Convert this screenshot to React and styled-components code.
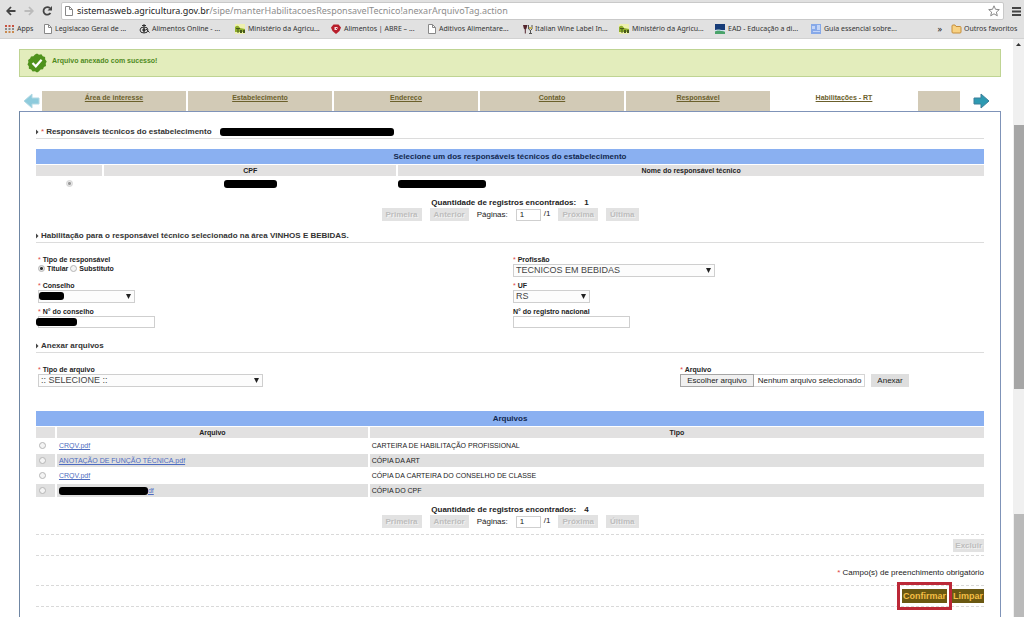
import React from 'react';
import styled, { createGlobalStyle, css } from 'styled-components';

const Global = createGlobalStyle`
  * { box-sizing: border-box; }
  body {
    margin: 0;
    background: #fff;
    color: #222;
    font: 8px/10px "Liberation Sans", Arial, sans-serif;
  }
  button, input, select { font: inherit; color: inherit; margin: 0; }
`;

const Window = styled.div`
  display: flex;
  flex-direction: column;
  min-height: 100vh;
  overflow: hidden;
`;

/* Browser bars */
const Chrome = styled.header`
  background: #e1e1e1;
  border-bottom: 1px solid #d2d2d2;
  font-family: "Noto Sans", "Open Sans", sans-serif;
`;
const Toolbar = styled.div`
  display: flex;
  align-items: center;
  gap: 8px;
  height: 20px;
  padding: 2px 3px 0 6px;
`;
const IconButton = styled.button`
  display: flex;
  padding: 0;
  border: 0;
  background: none;
  svg { display: block; }
`;
const AddressBar = styled.div`
  flex: 1;
  display: flex;
  align-items: center;
  gap: 3px;
  height: 18px;
  padding: 0 3px 0 2px;
  background: #fff;
  border: 1px solid #c9c9c9;
  border-radius: 2px;
  svg { display: block; }
`;
const Url = styled.div`
  flex: 1;
  font-size: 9px;
  line-height: 14px;
  color: #8d8d8d;
  b { font-weight: 400; color: #222; }
`;
const Bookmarks = styled.nav`
  display: flex;
  align-items: center;
  height: 18px;
  padding: 0 5px 0 4px;
`;
const Bookmark = styled.a`
  display: flex;
  align-items: center;
  gap: 2px;
  flex: 0 1 ${p => p.$width || 96}px;
  min-width: 0;
  font-size: 7px;
  color: #333;
  white-space: nowrap;
  text-decoration: none;
  svg { flex: none; display: block; }
`;
const More = styled.span`
  margin: 0 9px 0 auto;
  font-size: 9px;
`;

/* Page frame */
const Page = styled.div`
  flex: 1;
  display: flex;
`;
const Content = styled.main`
  flex: 1;
  display: flex;
  flex-direction: column;
  padding: 10px 12px 0 19px;
`;
const Scrollbar = styled.div`
  display: flex;
  flex-direction: column;
  flex: 0 0 10px;
  background: #f0f0f0;
`;
const Track = styled.div`
  flex: ${p => p.$part};
  svg { display: block; margin: 4px 3px; }
`;
const Thumb = styled.div`
  flex: ${p => p.$part};
  margin-left: 1px;
  background: ${p => (p.$light ? '#bababa' : '#a6a6a6')};
`;

const Alert = styled.div`
  display: flex;
  gap: 5px;
  height: 28px;
  padding: 3px 7px;
  background: #e3edbc;
  border: 1px solid #bfd493;
  font-size: 7px;
  line-height: 15px;
  font-weight: 700;
  color: #4f8a1c;
  svg { display: block; }
`;

/* Tabs */
const Tabs = styled.nav`
  display: flex;
  gap: 2px;
  margin-top: 14px;
  height: 20px;
`;
const TabArrow = styled.button`
  display: flex;
  align-items: center;
  justify-content: ${p => p.$align};
  flex: 0 0 ${p => p.$width}px;
  padding: 0;
  border: 0;
  background: none;
`;
const Tab = styled.a`
  flex: ${p => (p.$stub ? '0 0 42px' : '1')};
  background: ${p => (p.$active ? '#fff' : '#d2cab6')};
  color: #6b602c;
  font-size: 7px;
  line-height: 13px;
  font-weight: 700;
  text-align: center;
`;

const Panel = styled.section`
  flex: 1;
  padding: 0 16px;
  border: 1px solid #7f93b8;
  border-left-color: #6f86a3;
  border-bottom: 0;
`;

const Redacted = styled.span`
  display: inline-block;
  vertical-align: middle;
  width: ${p => p.$width}px;
  height: 8px;
  border-radius: 3px;
  background: #000;
`;
const SectionTitle = styled.h2`
  display: flex;
  align-items: center;
  gap: 2px;
  margin: ${p => p.$top}px 0 0;
  height: 13px;
  border-bottom: 1px solid #dcdcdc;
  font-size: 8px;
  line-height: 12px;
  font-weight: 700;
  color: #333;
  svg { display: block; }
  ${Redacted} { margin-left: 6px; }
`;
const Star = styled.span`
  color: #d44;
  font-weight: 400;
`;
const CoverBox = styled.div`
  position: relative;
  display: flex;
  ${Redacted} {
    position: absolute;
    top: 2px;
    left: ${p => p.$left}px;
  }
`;

/* Tables */
const Table = styled.table`
  width: 100%;
  margin-top: ${p => p.$top}px;
  border-collapse: separate;
  border-spacing: 0;
  table-layout: fixed;
  th, td { padding: 0; border: 0 solid #fff; }
  th + th, td + td { border-left-width: 2px; }
`;
const Column = styled.col`
  width: ${p => p.$width || 'auto'};
`;
const Heading = styled.th`
  background: #8ab0f1;
  color: #12284f;
  font-size: 8px;
  line-height: 15px;
  && { border-bottom-width: 1px; }
`;
const ColumnHead = styled.th`
  background: #e2e1e1;
  font-size: 7px;
  line-height: 11px;
  && { border-bottom-width: 1px; }
`;
const Row = styled.tr`
  td {
    height: 15px;
    border-bottom-width: 2px;
    background: ${p => (p.$shaded ? '#e0e0e0' : '#fff')};
    font-size: 7px;
    line-height: 13px;
    vertical-align: middle;
  }
`;
const Cell = styled.td`
  text-align: ${p => p.$align || 'left'};
  && { padding-left: ${p => p.$pad || 0}px; }
`;
const Radio = styled.input.attrs({ type: 'radio' })`
  appearance: none;
  flex: none;
  display: block;
  width: 7px;
  height: 7px;
  margin: ${p => (p.$centered ? '0 auto' : p.$inCell ? '0 0 0 3px' : '0')};
  border: 1px solid ${p => (p.$faint ? '#d4d4d4' : '#b5b5b5')};
  border-radius: 50%;
  background: #f4f4f4;
  &:checked {
    background: radial-gradient(circle, ${p => (p.$faint ? '#999' : '#333')} 0 1px, #e6e6e6 2px);
  }
`;
const FileLink = styled.a`
  color: #4e6cc0;
`;

/* Pagination */
const Pager = styled.div`
  display: flex;
  flex-direction: column;
  align-items: center;
  margin-top: 6px;
`;
const Total = styled.div`
  display: flex;
  gap: 8px;
  font-weight: 700;
`;
const PagerLine = styled.div`
  display: flex;
  align-items: center;
  gap: 8px;
  height: 13px;
  label { display: flex; align-items: center; gap: 8px; }
`;
const PageNumber = styled.span`
  display: flex;
  gap: 3px;
`;

const Button = styled.button`
  height: 13px;
  padding: 0 ${p => (p.$pad === undefined ? 4 : p.$pad)}px;
  border: 0;
  line-height: 13px;
  white-space: nowrap;
  ${p => p.$gold
    ? css`
      height: 14px;
      background: #6a5812;
      color: #f4bf45;
      font-size: 9px;
      font-weight: 700;
    `
    : css`background: #dedede;`}
  &:disabled {
    background: #e2e2e2;
    color: #bdbdbd;
    font-weight: 700;
    text-shadow: 1px 1px 0 #f2f2f2;
  }
`;

/* Form */
const FormGrid = styled.div`
  display: grid;
  grid-template-columns: ${p => p.$columns || '1fr 1fr'};
  grid-auto-rows: 22px;
  gap: 4px;
  margin-top: 12px;
  padding-left: 2px;
`;
const Field = styled.div`
  display: flex;
  flex-direction: column;
  align-items: flex-start;
`;
const fieldLabel = css`
  font-size: 7px;
  line-height: 9px;
  font-weight: 700;
`;
const Label = styled.label`${fieldLabel}`;
const Options = styled.div`
  display: flex;
  gap: 2px;
  label {
    ${fieldLabel}
    display: flex;
    align-items: center;
    gap: 2px;
  }
`;
const Caption = styled.div`${fieldLabel}`;
const SelectFrame = styled.div`
  position: relative;
  display: flex;
  width: ${p => p.$width}px;
  > svg {
    position: absolute;
    right: 4px;
    top: 4px;
    pointer-events: none;
  }
`;
const Select = styled.select`
  appearance: none;
  width: 100%;
  height: 13px;
  padding: 0 12px 0 2px;
  border: 1px solid #cfcfcf;
  border-radius: 0;
  background: #fcfcfc;
  font-size: 9px;
  line-height: 11px;
  color: #444;
`;
const TextInput = styled.input`
  width: ${p => p.$width}px;
  height: 12px;
  padding: 0 3px;
  border: 1px solid #cfcfcf;
  background: #fff;
  line-height: 10px;
`;
const FileLine = styled.div`
  display: flex;
  align-items: center;
  gap: 6px;
`;
const FilePicker = styled.label`
  display: flex;
  align-items: center;
  height: 13px;
  padding-right: 3px;
  border: 1px solid #d5d5d5;
  line-height: 11px;
  white-space: nowrap;
`;
const FileButton = styled.span`
  margin: -1px 4px -1px -1px;
  padding: 0 6px;
  border: 1px solid #a5a5a5;
  background: #f0f0f0;
`;
const HiddenFile = styled.input.attrs({ type: 'file' })`
  position: absolute;
  width: 1px;
  height: 1px;
  opacity: 0;
`;

const ActionBar = styled.div`
  display: flex;
  align-items: center;
  justify-content: flex-end;
  gap: 5px;
  height: 22px;
  margin-top: ${p => p.$top}px;
  border: 0 dashed #d9d9d9;
  border-width: 1px 0;
`;
const Required = styled.p`
  margin: 12px 0 0;
  text-align: right;
`;
const Highlight = styled.div`
  position: relative;
  display: flex;
  &::after {
    content: "";
    position: absolute;
    inset: -7px -5px;
    border: 3px solid #bb2837;
    pointer-events: none;
  }
`;

/* Icons */
const PageIcon = () => (
  <svg width="10" height="10" viewBox="0 0 10 10" fill="#fff" stroke="#888">
    <path d="M1.500 .5h4l3 3v6h-7z" /><path d="M5.500.5v3h3" fill="none" />
  </svg>
);
const AppsIcon = () => (
  <svg width="11" height="10" viewBox="0 0 11 10">
    {[0, 1, 2].map(r => [0, 1, 2].map(c => (
      <rect key={`${r}${c}`} x={1 + c * 3.500} y={1 + r * 3} width="2" height="2" fill={['#c8523f', '#8a8a8a', '#c98a4f'][r]} />
    )))}
  </svg>
);
const FoodIcon = () => (
  <svg width="11" height="10" viewBox="0 0 11 10" fill="none" stroke="#333">
    <ellipse cx="5" cy="6" rx="4" ry="3" /><path d="M5 0v9M3 1.500h4M7 5l3.500 3.500" /><circle cx="5" cy="6" r="1.200" fill="#333" />
  </svg>
);
const MinistryIcon = () => (
  <svg width="11" height="10" viewBox="0 0 11 10">
    <path d="M0 0h10v10H0z" fill="#eef0b0" /><path d="M0 6V3q3-3 5 1l5 1v3H0z" fill="#8fae2c" /><path d="M1 4h4v1H3.500v4H2.500V5H1zM5 6h2v3H5zM8 6h2v3H8z" fill="#47591b" />
  </svg>
);
const AbreIcon = () => (
  <svg width="11" height="10" viewBox="0 0 11 10">
    <path d="M2.500 .5h5L10 3.500 8.500 7 5 10 1.500 7 0 3.500z" fill="#b81f2c" /><path d="M3.500 3h3v3h-3z" fill="#f4dfe1" /><path d="M5 4l3 3" stroke="#b81f2c" />
  </svg>
);
const WineIcon = () => (
  <svg width="10" height="10" viewBox="0 0 10 10">
    <path d="M0 1h4.500L3.500 4.500 2.800 5.500v4H1.800v-4L.8 4.500z" fill="#54252d" /><path d="M5.500 1v4l2 1.500 1.500-1.500V1M7.500 6v3.500M6 9.500h3" fill="none" stroke="#555" /><path d="M6 3h3v2H6z" fill="#c9b65d" />
  </svg>
);
const EadIcon = () => (
  <svg width="11" height="10" viewBox="0 0 11 10">
    <path d="M0 0h10v6H0z" fill="#173c78" /><path d="M0 7.500l4-2 6 2v2.500H0z" fill="#4aa36a" /><path d="M0 6.500c3-1 6 0 10 .5" stroke="#cfe3f5" fill="none" />
  </svg>
);
const GuideIcon = () => (
  <svg width="11" height="10" viewBox="0 0 11 10">
    <path d="M0 0h10v10H0z" fill="#87a9e8" /><path d="M1 2h3v3H1zM6 1h3v5H6zM2 7h7v1H2z" fill="#c3d5f7" />
  </svg>
);
const FolderIcon = () => (
  <svg width="11" height="10" viewBox="0 0 11 10" fill="#f8d283" stroke="#c58e3c">
    <path d="M1 2q0-1 1-1h2l1 1.500h4q1 0 1 1V8q0 1-1 1H2Q1 9 1 8z" />
  </svg>
);
const CheckBadge = () => (
  <svg width="20" height="20" viewBox="0 0 20 20">
    <path d="M10 .5l2 1.300 2.400-.5 1.400 2 2.300.800.100 2.400 1.500 1.900-1 2.100.3 2.400-2.100 1.200-.9 2.200-2.400.2L11.800 18.500 10 19.500l-2-1.200-2.400.3-1.400-2-2.300-.9-.1-2.400L.5 11.400l.9-2.200-.3-2.300 2-1.300L4 3.400l2.400-.2L8 1.500z" fill="#4f921d" />
    <path d="M5.500 10l3.300 3.300 5.800-6.600" fill="none" stroke="#fff" strokeWidth="2.200" />
  </svg>
);
const TabArrowIcon = ({ left }) => (
  <svg width="17" height="16" viewBox="0 0 17 16">
    <path
      transform={left ? 'translate(17 0) scale(-1 1)' : undefined}
      d="M1 5h7V1l8 7-8 7v-4H1z"
      fill={left ? '#8ecbdc' : '#2d9ab2'}
      stroke={left ? '#b3d9e4' : '#3d7f99'}
    />
  </svg>
);
const Chevron = () => (
  <svg width="3" height="6" viewBox="0 0 3 6"><path d="M0 .5L2.500 3 0 5.500z" fill="#444" /></svg>
);
const DownArrow = () => (
  <svg width="5" height="5" viewBox="0 0 5 5"><path d="M0 0h5L2.500 5z" fill="#222" /></svg>
);

const bookmarks = [
  [PageIcon, 'Legislacao Geral de ...'],
  [FoodIcon, 'Alimentos Online - ...'],
  [MinistryIcon, 'Ministério da Agricu...'],
  [AbreIcon, 'Alimentos | ABRE – ...'],
  [PageIcon, 'Aditivos Alimentare...'],
  [WineIcon, 'Italian Wine Label In...'],
  [MinistryIcon, 'Ministério da Agricu...'],
  [EadIcon, 'EAD - Educação a di...'],
  [GuideIcon, 'Guia essencial sobre...'],
];
const tabs = ['Área de interesse', 'Estabelecimento', 'Endereço', 'Contato', 'Responsável', 'Habilitações - RT'];
const files = [
  ['CRQV.pdf', 'CARTEIRA DE HABILITAÇÃO PROFISSIONAL'],
  ['ANOTAÇÃO DE FUNÇÃO TÉCNICA.pdf', 'CÓPIA DA ART'],
  ['CRQV.pdf', 'CÓPIA DA CARTEIRA DO CONSELHO DE CLASSE'],
  [null, 'CÓPIA DO CPF'],
];

function Pagination({ total }) {
  return (
    <Pager>
      <Total><span>Quantidade de registros encontrados:</span><span>{total}</span></Total>
      <PagerLine>
        <Button disabled>Primeira</Button>
        <Button disabled>Anterior</Button>
        <PageNumber>
          <label>Páginas: <TextInput $width={25} defaultValue="1" /></label>
          <span>/1</span>
        </PageNumber>
        <Button disabled>Próxima</Button>
        <Button disabled>Última</Button>
      </PagerLine>
    </Pager>
  );
}

function SelectField({ id, label, width, value, redacted }) {
  return (
    <Field>
      <Label htmlFor={id}><Star>* </Star>{label}</Label>
      <CoverBox $left={1}>
        <SelectFrame $width={width}>
          <Select id={id}><option>{value}</option></Select>
          <DownArrow />
        </SelectFrame>
        {redacted && <Redacted $width={redacted} />}
      </CoverBox>
    </Field>
  );
}

export default function App() {
  return (
    <Window>
      <Global />
      <Chrome>
        <Toolbar>
          <IconButton aria-label="Voltar">
            <svg width="10" height="10" viewBox="0 0 10 10" fill="none" stroke="#444" strokeWidth="1.800"><path d="M9.500 5H1.500M5 1L1.200 5 5 9" /></svg>
          </IconButton>
          <IconButton aria-label="Avançar">
            <svg width="10" height="10" viewBox="0 0 10 10" fill="none" stroke="#bbb" strokeWidth="1.800"><path d="M.5 5h8M5 1l3.800 4L5 9" /></svg>
          </IconButton>
          <IconButton aria-label="Recarregar">
            <svg width="11" height="10" viewBox="0 0 11 10"><path d="M8.500 7A3.800 3.800 0 1 1 8 2.200" fill="none" stroke="#444" strokeWidth="1.800" /><path d="M10 0v4.500H5.500z" fill="#444" /></svg>
          </IconButton>
          <AddressBar>
            <PageIcon />
            <Url><b>sistemasweb.agricultura.gov.br</b>/sipe/manterHabilitacoesResponsavelTecnico!anexarArquivoTag.action</Url>
            <svg width="12" height="12" viewBox="0 0 12 12" fill="#fff" stroke="#888"><path d="M6 .8l1.500 3.500 3.800.3-2.900 2.500.9 3.700L6 8.800l-3.300 2 .9-3.700L.7 4.600l3.800-.3z" /></svg>
          </AddressBar>
          <IconButton aria-label="Menu">
            <svg width="9" height="9" viewBox="0 0 9 9" fill="#444"><path d="M0 0h9v2H0zM0 3.500h9v2H0zM0 7h9v2H0z" /></svg>
          </IconButton>
        </Toolbar>
        <Bookmarks>
          <Bookmark href="#" $width={39}><AppsIcon />Apps</Bookmark>
          {bookmarks.map(([Icon, text], i) => (
            <Bookmark href="#" key={i}><Icon />{text}</Bookmark>
          ))}
          <More>»</More>
          <Bookmark href="#" $width={68}><FolderIcon />Outros favoritos</Bookmark>
        </Bookmarks>
      </Chrome>

      <Page>
        <Content>
          <Alert role="status"><CheckBadge />Arquivo anexado com sucesso!</Alert>
          <Tabs>
            <TabArrow $width={21} $align="flex-end" aria-label="Aba anterior"><TabArrowIcon left /></TabArrow>
            {tabs.map((t, i) => <Tab href="#" key={t} $active={i === 5}>{t}</Tab>)}
            <Tab as="div" $stub />
            <TabArrow $width={39} $align="center" aria-label="Próxima aba"><TabArrowIcon /></TabArrow>
          </Tabs>

          <Panel>
            <SectionTitle $top={14}>
              <Chevron /><Star>* </Star> Responsáveis técnicos do estabelecimento <Redacted $width={174} />
            </SectionTitle>
            <Table $top={10}>
              <colgroup><Column $width="7%" /><Column $width="31%" /><Column /></colgroup>
              <thead>
                <tr><Heading colSpan={3}>Selecione um dos responsáveis técnicos do estabelecimento</Heading></tr>
                <tr>
                  <ColumnHead />
                  <ColumnHead>CPF</ColumnHead>
                  <ColumnHead>Nome do responsável técnico</ColumnHead>
                </tr>
              </thead>
              <tbody>
                <Row>
                  <Cell><Radio $centered $faint name="responsavel" defaultChecked aria-label="Responsável" /></Cell>
                  <Cell $align="center"><Redacted $width={53} /></Cell>
                  <Cell><Redacted $width={88} /></Cell>
                </Row>
              </tbody>
            </Table>
            <Pagination total={1} />

            <SectionTitle $top={9}>
              <Chevron /> Habilitação para o responsável técnico selecionado na área VINHOS E BEBIDAS.
            </SectionTitle>
            <FormGrid>
              <Field>
                <Caption><Star>* </Star>Tipo de responsável</Caption>
                <Options>
                  <label><Radio name="tipo" defaultChecked />Titular</label>
                  <label><Radio name="tipo" />Substituto</label>
                </Options>
              </Field>
              <SelectField id="profissao" label="Profissão" width={202} value="TECNICOS EM BEBIDAS" />
              <SelectField id="conselho" label="Conselho" width={97} value="" redacted={25} />
              <SelectField id="uf" label="UF" width={77} value="RS" />
              <Field>
                <Label htmlFor="numero"><Star>* </Star>N° do conselho</Label>
                <CoverBox $left={-2}>
                  <TextInput id="numero" $width={117} />
                  <Redacted $width={41} />
                </CoverBox>
              </Field>
              <Field>
                <Label htmlFor="registro">N° do registro nacional</Label>
                <TextInput id="registro" $width={117} />
              </Field>
            </FormGrid>

            <SectionTitle $top={11}><Chevron /> Anexar arquivos</SectionTitle>
            <FormGrid $columns="21fr 10fr">
              <SelectField id="tipo-arquivo" label="Tipo de arquivo" width={225} value=":: SELECIONE ::" />
              <Field>
                <Label htmlFor="arquivo"><Star>* </Star>Arquivo</Label>
                <FileLine>
                  <FilePicker>
                    <FileButton>Escolher arquivo</FileButton>
                    Nenhum arquivo selecionado
                    <HiddenFile id="arquivo" />
                  </FilePicker>
                  <Button $pad={6}>Anexar</Button>
                </FileLine>
              </Field>
            </FormGrid>

            <Table $top={24}>
              <colgroup><Column $width="2%" /><Column $width="33%" /><Column /></colgroup>
              <thead>
                <tr><Heading colSpan={3}>Arquivos</Heading></tr>
                <tr>
                  <ColumnHead />
                  <ColumnHead>Arquivo</ColumnHead>
                  <ColumnHead>Tipo</ColumnHead>
                </tr>
              </thead>
              <tbody>
                {files.map(([name, type], i) => (
                  <Row key={i} $shaded={i % 2 === 1}>
                    <Cell><Radio $inCell name="arquivo-anexado" aria-label={type} /></Cell>
                    <Cell $pad={2}>
                      {name ? <FileLink href="#">{name}</FileLink> : <><Redacted $width={89} /><FileLink href="#">df</FileLink></>}
                    </Cell>
                    <Cell $pad={2}>{type}</Cell>
                  </Row>
                ))}
              </tbody>
            </Table>
            <Pagination total={4} />

            <ActionBar $top={6}><Button disabled $pad={2}>Excluir</Button></ActionBar>
            <Required><Star>* </Star>Campo(s) de preenchimento obrigatório</Required>
            <ActionBar $top={7}>
              <Highlight><Button $gold $pad={1}>Confirmar</Button></Highlight>
              <Button $gold $pad={1}>Limpar</Button>
            </ActionBar>
          </Panel>
        </Content>
        <Scrollbar aria-hidden="true">
          <Track $part={86}>
            <svg width="5" height="3" viewBox="0 0 5 3"><path d="M0 3h5L2.500 0z" fill="#333" /></svg>
          </Track>
          <Thumb $part={264} />
          <Track $part={125} />
          <Thumb $part={103} $light />
        </Scrollbar>
      </Page>
    </Window>
  );
}
